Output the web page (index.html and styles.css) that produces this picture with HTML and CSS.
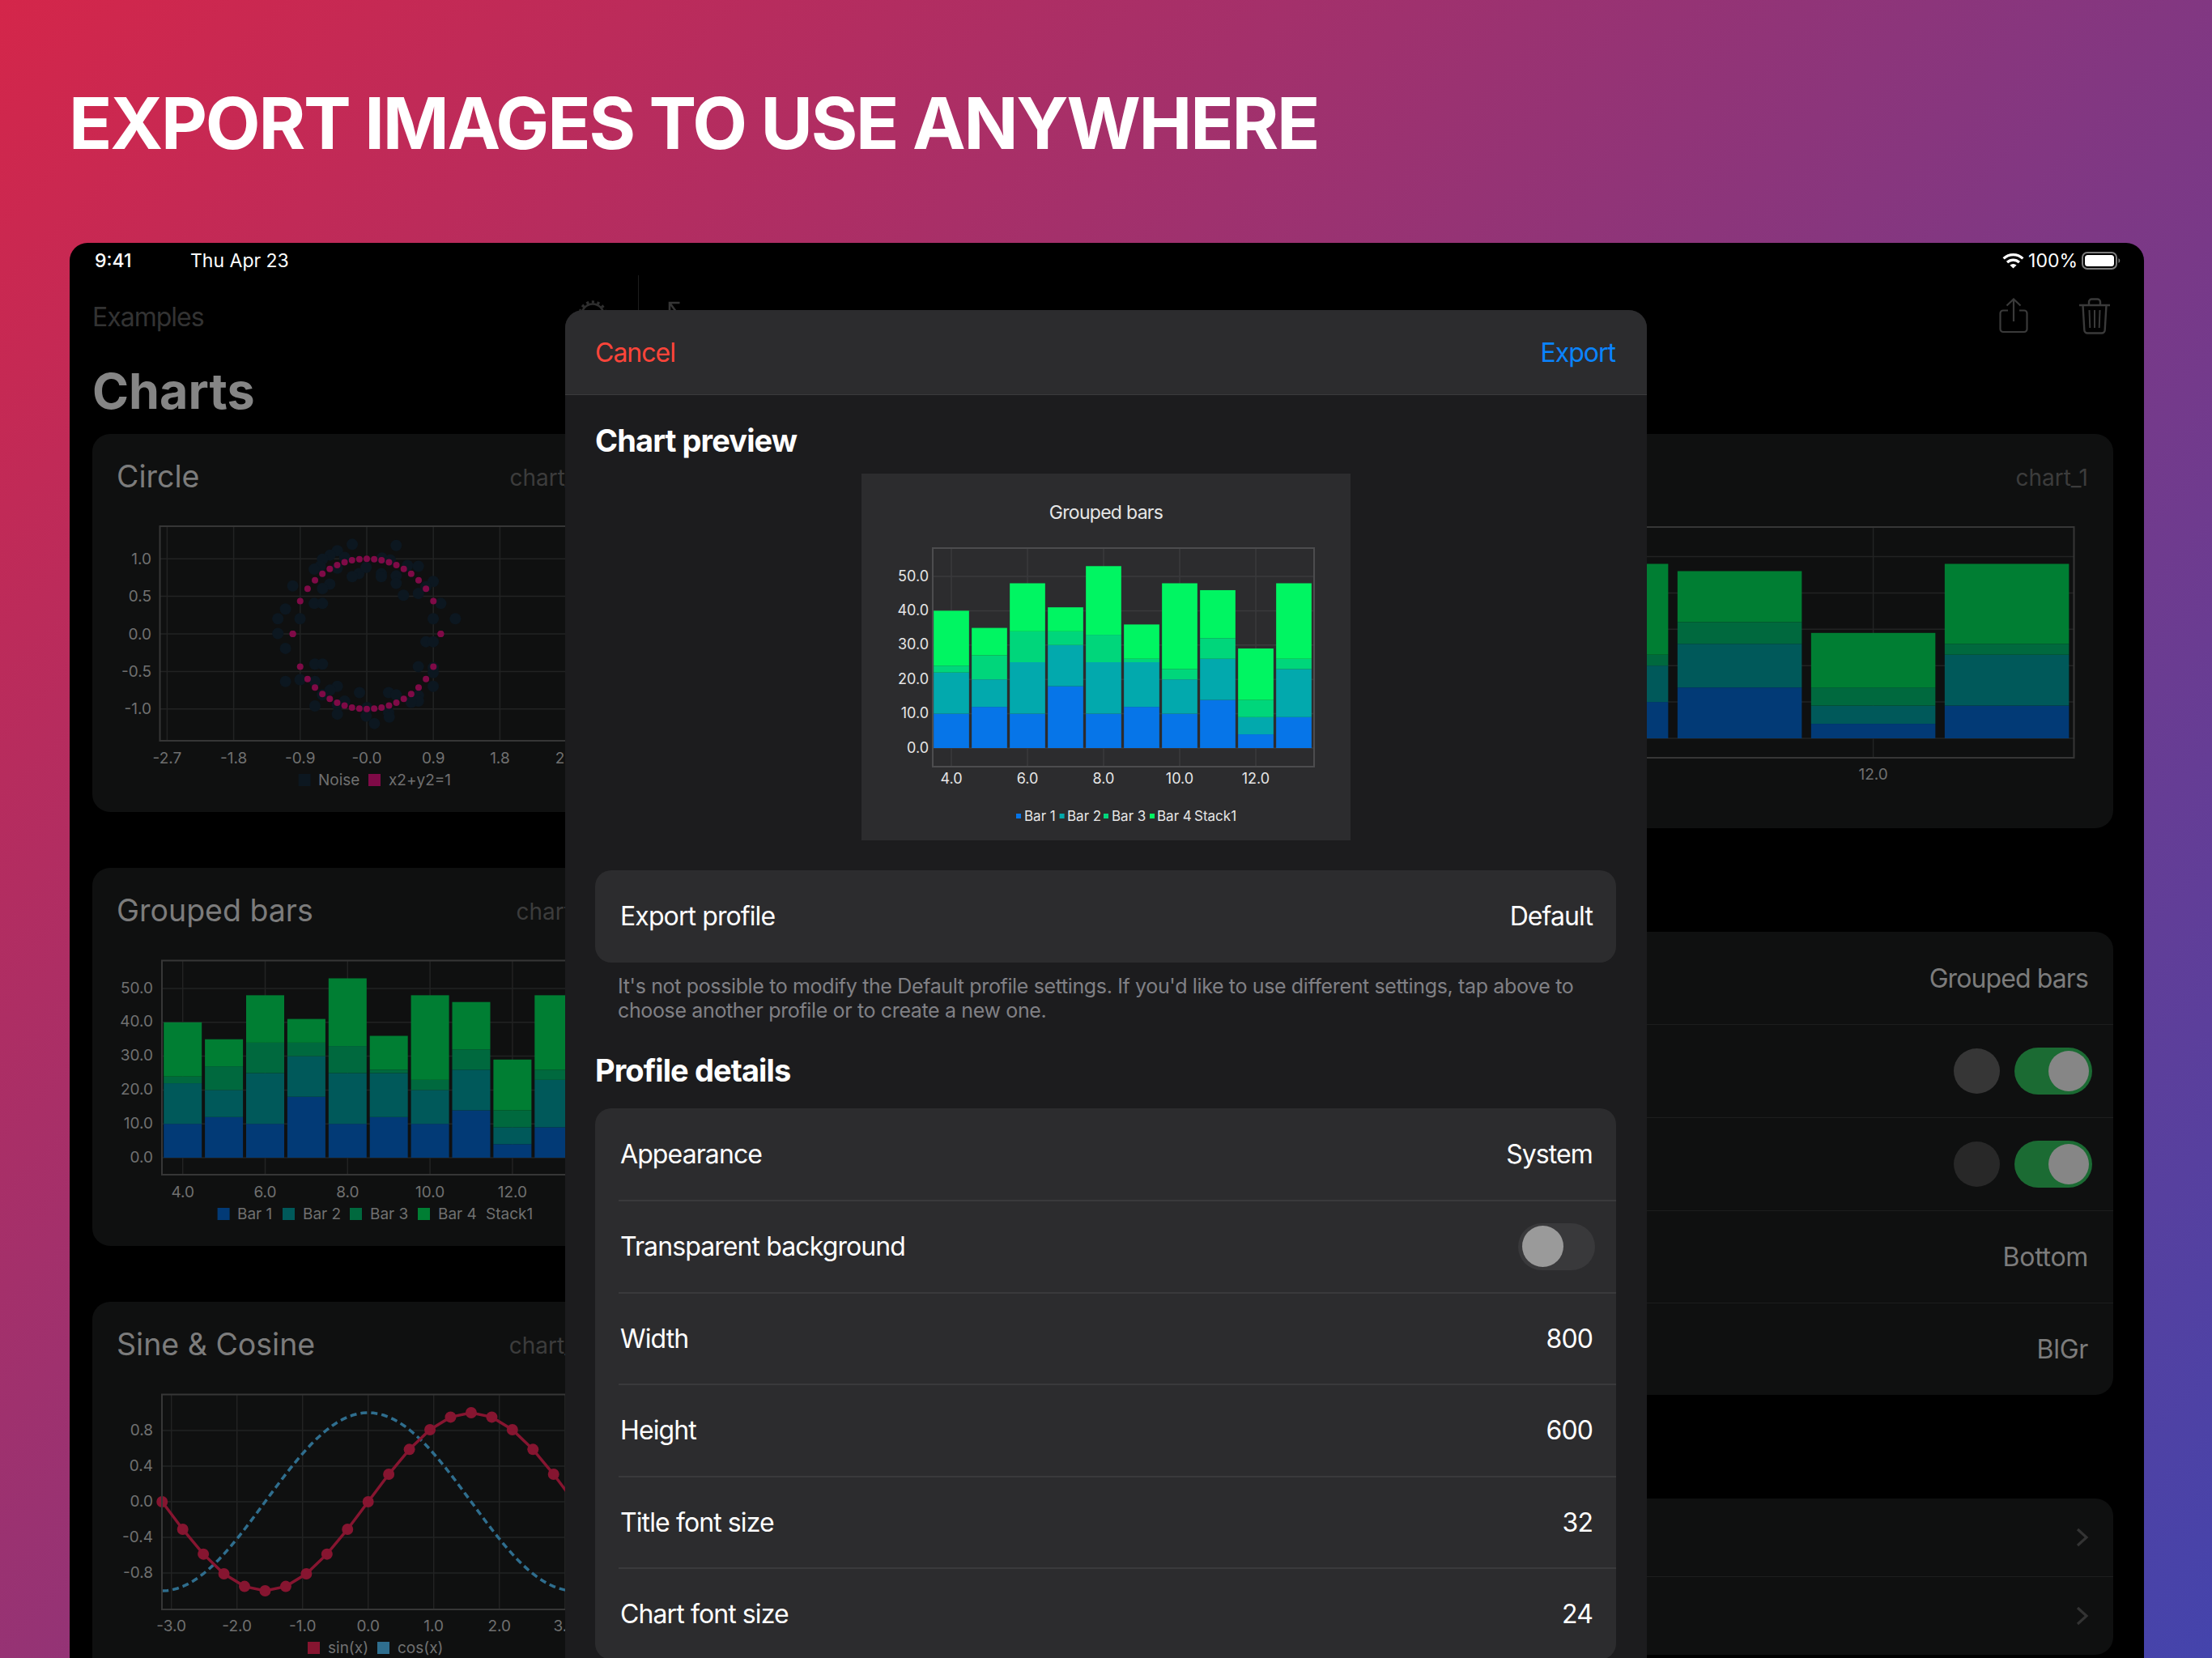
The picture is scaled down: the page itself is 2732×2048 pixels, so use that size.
FILE: index.html
```html
<!DOCTYPE html>
<html lang="en">
<head>
  <meta charset="UTF-8">
  <title>Export images to use anywhere</title>
  <link rel="stylesheet" href="styles.css">
</head>
<body>
  <header class="banner">
    <h1>EXPORT IMAGES TO USE ANYWHERE</h1>
  </header>

  <div class="device">
    <div class="status-bar">
      <span class="status-time">9:41</span>
      <span class="status-date">Thu Apr 23</span>
      <span class="status-right">
        <svg class="wifi" width="27" height="20" viewBox="0 0 27 20">
          <path d="M1.6 7.4a17 17 0 0 1 23.8 0" fill="none" stroke="#fff" stroke-width="3.2"/>
          <path d="M6 12a11 11 0 0 1 15 0" fill="none" stroke="#fff" stroke-width="3.2"/>
          <path d="M13.5 19.6 9.4 15.6a6 6 0 0 1 8.2 0z" fill="#fff"/>
        </svg>
        <span class="status-battery">100%</span>
        <svg width="49" height="22" viewBox="0 0 49 22">
          <rect x="1" y="1" width="42" height="20" rx="6" fill="none" stroke="#7d7d7d" stroke-width="2"/>
          <rect x="4" y="4" width="36" height="14" rx="3.5" fill="#fff"/>
          <path d="M45.5 8v6a3.4 3.4 0 0 0 0-6z" fill="#7d7d7d"/>
        </svg>
      </span>
    </div>

    <div class="split">
      <aside class="sidebar">
        <div class="sidebar-nav">
          <span class="nav-back">Examples</span>
          <svg class="gear" width="36" height="36" viewBox="0 0 36 36">
            <circle cx="18" cy="18" r="13.5" fill="none" stroke="#2e2e2e" stroke-width="2.5"/>
            <circle cx="18" cy="18" r="16" fill="none" stroke="#2e2e2e" stroke-width="3.5" stroke-dasharray="3.2 3.5"/>
          </svg>
        </div>
        <h2 class="page-title">Charts</h2>

        <section class="card chart-card">
          <div class="card-head"><span class="card-title">Circle</span><span class="card-id">chart_0</span></div>
          <svg class="chart" id="chartCircle" width="636" height="383"></svg>
        </section>

        <section class="card chart-card">
          <div class="card-head"><span class="card-title">Grouped bars</span><span class="card-id">chart_1</span></div>
          <svg class="chart" id="chartBars" width="636" height="383"></svg>
        </section>

        <section class="card chart-card">
          <div class="card-head"><span class="card-title">Sine &amp; Cosine</span><span class="card-id">chart_2</span></div>
          <svg class="chart" id="chartSine" width="636" height="383"></svg>
        </section>
      </aside>

      <main class="detail">
        <div class="detail-nav">
          <svg class="expand" width="18" height="24" viewBox="0 0 18 24">
            <path d="M15.5 2H3v12M3 2l14 19" fill="none" stroke="#353535" stroke-width="2.6"/>
          </svg>
          <svg class="share" width="36" height="44" viewBox="0 0 36 44">
            <path d="M11 15.5H5a3.5 3.5 0 0 0-3.5 3.5v19.5A3.5 3.5 0 0 0 5 42h26a3.5 3.5 0 0 0 3.5-3.5V19a3.5 3.5 0 0 0-3.5-3.5h-6" fill="none" stroke="#3a3a3a" stroke-width="2.2"/>
            <path d="M18 29V2M9.5 9.5 18 1.5l8.5 8" fill="none" stroke="#3a3a3a" stroke-width="2.2"/>
          </svg>
          <svg class="trash" width="40" height="45" viewBox="0 0 40 45">
            <path d="M1 9h38M13 9V5a3.5 3.5 0 0 1 3.5-3.5h7A3.5 3.5 0 0 1 27 5v4" fill="none" stroke="#3a3a3a" stroke-width="2.4"/>
            <path d="M5.5 9l1.8 30.5a4 4 0 0 0 4 4h17.4a4 4 0 0 0 4-4L34.500 9" fill="none" stroke="#3a3a3a" stroke-width="2.4"/>
            <path d="M13.500 15l.8 22M20 15v22M26.500 15l-.8 22" fill="none" stroke="#3a3a3a" stroke-width="2"/>
          </svg>
        </div>

        <section class="card chart-card chart-card-wide">
          <div class="card-head card-head-right"><span class="card-id">chart_1</span></div>
          <svg class="chart" id="chartBarsWide" width="1795" height="403"></svg>
        </section>

        <section class="card settings">
          <div class="set-row"><span class="set-value set-value-tight">Grouped bars</span></div>
          <div class="set-row set-row-toggle">
            <span class="swatch swatch-a"></span>
            <span class="dim-toggle"><span class="dim-knob"></span></span>
          </div>
          <div class="set-row set-row-toggle">
            <span class="swatch swatch-b"></span>
            <span class="dim-toggle"><span class="dim-knob"></span></span>
          </div>
          <div class="set-row"><span class="set-value">Bottom</span></div>
          <div class="set-row"><span class="set-value">BlGr</span></div>
        </section>

        <section class="card links">
          <div class="link-row">
            <svg width="16" height="24" viewBox="0 0 16 24"><path d="M2 2l11 10L2 22" fill="none" stroke="#333" stroke-width="3.2"/></svg>
          </div>
          <div class="link-row">
            <svg width="16" height="24" viewBox="0 0 16 24"><path d="M2 2l11 10L2 22" fill="none" stroke="#333" stroke-width="3.2"/></svg>
          </div>
        </section>
      </main>
    </div>

    <div class="modal">
      <div class="modal-head">
        <span class="btn-cancel">Cancel</span>
        <span class="btn-export">Export</span>
      </div>
      <div class="modal-body">
        <h3 class="modal-heading">Chart preview</h3>
        <svg class="preview" id="chartPreview" width="604" height="453"></svg>

        <div class="group group-profile">
          <div class="group-row"><span>Export profile</span><span>Default</span></div>
        </div>
        <p class="note">It's not possible to modify the Default profile settings. If you'd like to use different settings, tap above to choose another profile or to create a new one.</p>

        <h3 class="modal-heading heading-details">Profile details</h3>
        <div class="group">
          <div class="group-row"><span>Appearance</span><span>System</span></div>
          <div class="group-row">
            <span>Transparent background</span>
            <span class="toggle"><span class="knob"></span></span>
          </div>
          <div class="group-row"><span>Width</span><span>800</span></div>
          <div class="group-row"><span>Height</span><span>600</span></div>
          <div class="group-row"><span>Title font size</span><span>32</span></div>
          <div class="group-row"><span>Chart font size</span><span>24</span></div>
        </div>
      </div>
    </div>
  </div>

  <script src="charts.js"></script>
</body>
</html>
```

FILE: styles.css
```css
* {
  box-sizing: border-box;
}

html, body {
  margin: 0;
  height: 2048px;
  overflow: hidden;
}

body {
  font-family: 'Inter', 'Liberation Sans', sans-serif;
  background: linear-gradient(135deg, #d4264a 0%, #4444ac 100%);
  color: #fff;
}

.banner {
  height: 300px;
  padding: 90px 0 0 85px;
}

.banner h1 {
  margin: 0;
  font-size: 88px;
  line-height: 124px;
  font-weight: 700;
  letter-spacing: -2.2px;
  color: #fff;
}

.device {
  position: relative;
  width: 2562px;
  height: 1748px;
  margin-left: 86px;
  background: #000;
  border-radius: 22px 22px 0 0;
  overflow: hidden;
}

/* status bar */
.status-bar {
  display: flex;
  align-items: center;
  height: 40px;
  padding: 3px 28px 0 31px;
  font-size: 23px;
}

.status-time {
  width: 118px;
  font-weight: 500;
}

.status-right {
  display: flex;
  align-items: center;
  gap: 5px;
  margin-left: auto;
}

.status-battery {
  font-size: 23px;
}

.split {
  display: flex;
}

/* left column */
.sidebar {
  flex: 0 0 703px;
  height: 1708px;
  padding: 0 30px 0 28px;
  border-right: 1px solid #1c1c1c;
}

.sidebar-nav {
  display: flex;
  justify-content: space-between;
  align-items: center;
  padding-top: 32px;
  height: 72px;
}

.nav-back {
  font-size: 32px;
  letter-spacing: -1px;
  line-height: 40px;
  color: #333;
}

.gear {
  margin: -6px 8px 0 0;
}

.page-title {
  margin: 35px 0 17px;
  font-size: 61px;
  line-height: 72px;
  font-weight: 700;
  color: #858585;
}

.card {
  background: #0f1010;
  border-radius: 22px;
}

.chart-card {
  height: 467px;
  margin-bottom: 69px;
  overflow: hidden;
}

.chart-card-wide {
  height: 487px;
  margin-bottom: 128px;
}

.card-head {
  display: flex;
  justify-content: space-between;
  align-items: center;
  height: 84px;
  padding: 32px 31px 10px 30px;
}

.card-head-right {
  justify-content: flex-end;
}

.card-title {
  font-size: 37.500px;
  line-height: 44px;
  color: #7c7c7c;
}

.card-id {
  font-size: 28px;
  line-height: 42px;
  padding-top: 2px;
  color: #3c3c3c;
}

.chart {
  display: block;
}

.chart text {
  font-family: 'Inter', 'Liberation Sans', sans-serif;
  font-size: 19px;
  fill: #707070;
}

/* right column */
.detail {
  flex: 1;
  padding: 0 38px 0 25px;
}

.detail-nav {
  display: flex;
  height: 196px;
  padding-top: 28px;
}

.expand {
  margin: 4px 0 0 10px;
}

.share {
  margin-left: auto;
}

.trash {
  margin: 0 3px 0 62px;
}

.set-row {
  display: flex;
  justify-content: flex-end;
  align-items: center;
  height: 114px;
  padding-right: 31px;
  border-top: 1px solid #1d1e1e;
}

.set-row:first-child {
  border-top: none;
}

.set-row-toggle {
  height: 115px;
  gap: 18px;
  padding-right: 26px;
}

.set-value {
  font-size: 32px;
  letter-spacing: -0.3px;
  color: #7c7c7c;
}

.set-value-tight {
  letter-spacing: -0.9px;
}

.swatch {
  width: 57px;
  height: 56px;
  border-radius: 50%;
}

.swatch-a {
  background: #363636;
}

.swatch-b {
  background: #282828;
}

.dim-toggle {
  display: flex;
  justify-content: flex-end;
  align-items: center;
  width: 96px;
  height: 58px;
  padding-right: 4px;
  border-radius: 29px;
  background: #1b6b33;
}

.dim-knob {
  width: 50px;
  height: 50px;
  border-radius: 50%;
  background: #868686;
}

.links {
  height: 193px;
  margin-top: 128px;
}

.link-row {
  display: flex;
  justify-content: flex-end;
  align-items: center;
  height: 96px;
  padding-right: 30px;
  border-top: 1px solid #1d1e1e;
}

.link-row:first-child {
  border-top: none;
}

/* export sheet, sits over both columns */
.modal {
  position: absolute;
  left: 612px;
  top: 83px;
  width: 1336px;
  height: 1700px;
  background: #1c1c1e;
  border-radius: 22px 22px 0 0;
  overflow: hidden;
}

.modal-head {
  display: flex;
  justify-content: space-between;
  align-items: center;
  height: 105px;
  padding: 0 39px 0 37px;
  background: #2c2c2e;
  border-bottom: 1px solid #3a3a3c;
  font-size: 32px;
  letter-spacing: -1px;
}

.btn-cancel {
  color: #ff453a;
}

.btn-export {
  color: #0a84ff;
}

.modal-body {
  display: flex;
  flex-direction: column;
  padding: 36px 38px 0 37px;
}

.modal-heading {
  margin: 0;
  font-size: 38px;
  line-height: 40px;
  font-weight: 700;
  letter-spacing: -0.9px;
}

.heading-details {
  margin-top: 39px;
  margin-bottom: 27px;
}

.preview {
  display: block;
  flex: none;
  margin: 21px auto 37px;
  background: #2c2c2e;
}

.preview text {
  font-family: 'Inter', 'Liberation Sans', sans-serif;
  font-size: 18px;
  fill: #e6e6e6;
}

.preview .preview-title {
  font-size: 23px;
  letter-spacing: -0.7px;
}

.preview .preview-legend {
  font-size: 17px;
}

.group {
  background: #2c2c2e;
  border-radius: 20px;
  padding-left: 29px;
  font-size: 32px;
  letter-spacing: -0.9px;
}

.group-row {
  display: flex;
  justify-content: space-between;
  align-items: center;
  height: 113.500px;
  padding-right: 29px;
  border-top: 2px solid #3a3a3c;
}

.group-row:first-child {
  border-top: none;
}

.group-row span:first-child {
  margin-left: 2px;
}

.note {
  margin: 14px 0 0 28px;
  max-width: 1210px;
  font-size: 25px;
  letter-spacing: -0.36px;
  line-height: 30px;
  color: #808085;
}

.toggle {
  display: flex;
  align-items: center;
  width: 95px;
  height: 58px;
  margin-right: -3px;
  padding-left: 3px;
  border-radius: 29px;
  background: #39393b;
}

.knob {
  width: 51px;
  height: 51px;
  border-radius: 50%;
  background: #9a9a9a;
}
```

FILE: charts.js
```js
const DIM = { grid: '#222323', frame: '#363636', colors: ['#023a76', '#00595a', '#00693e', '#007e33'] };
const LIT = { grid: '#3a3a3c', frame: '#4c4c4e', colors: ['#0675e8', '#02a9ad', '#00d67b', '#00f562'] };

// [bar 1, bar 2, bar 3, bar 4] for x = 4..13
const STACKS = [
  [10, 12, 2, 16], [12, 8, 7, 8], [10, 15, 9, 14], [18, 12, 4, 7], [10, 15, 8, 20],
  [12, 13, 1, 10], [10, 10, 3, 25], [14, 12, 6, 14], [4, 5, 5, 15], [9, 14, 3, 22],
];

// noise cloud, sampled off the reference plot (offsets from the plot centre)
const NOISE = [
  [-44, -241], [89, -238], [-89, -224], [-111, -212], [-134, -201], [-67, -206], [46, -204], [71, -199],
  [123, -184], [156, -182], [-141, -182], [-159, -174], [-89, -177], [-24, -162], [-2, -179], [44, -162],
  [44, -154], [-44, -154], [89, -156], [201, -141], [-224, -129], [-112, -134], [-134, -122], [89, -136],
  [179, -127], [111, -104], [156, -109], [-159, -82], [-134, -82], [224, -82], [-246, -67], [-269, -41],
  [-202, -41], [201, -41], [268, -41], [-269, -1], [-246, 39], [179, 21], [201, 21], [-157, 81],
  [-134, 81], [156, 88], [201, 91], [201, 104], [-246, 128], [-202, 123], [-157, 128], [-89, 141],
  [-111, 151], [-134, 164], [201, 141], [-22, 158], [66, 158], [89, 164], [156, 166], [156, 181],
  [134, 184], [-67, 181], [-89, 191], [-157, 194], [-89, 216], [1, 198], [-2, 221], [66, 211],
  [68, 224], [23, 241],
];

function line(x1, y1, x2, y2, color) {
  return `<line x1="${x1}" y1="${y1}" x2="${x2}" y2="${y2}" stroke="${color}" stroke-width="1.500"/>`;
}

function label(x, y, str, anchor, cls) {
  return `<text x="${x}" y="${y}" text-anchor="${anchor || 'middle'}" dominant-baseline="central"${cls ? ` class="${cls}"` : ''}>${str}</text>`;
}

function legend(items, y, size, cls) {
  return items.map(it => (it.color ? `<rect x="${it.x}" y="${y - size / 2}" width="${size}" height="${size}" fill="${it.color}"/>` : '')
    + label(it.textX, y, it.text, 'start', cls)).join('');
}

function frame(f, theme) {
  return `<rect x="${f[0]}" y="${f[1]}" width="${f[2] - f[0]}" height="${f[3] - f[1]}" fill="none" stroke="${theme.frame}" stroke-width="2"/>`;
}

function barChart(o) {
  const theme = o.theme;
  let out = '';
  for (let v = 0; v <= 50; v += 10) {
    const y = o.base - v * o.unitY;
    out += line(o.frame[0], y, o.frame[2], y, theme.grid);
    if (o.yLabelX) out += label(o.yLabelX, y - 1, v.toFixed(1), 'end');
  }
  for (let v = 4; v <= 12; v += 2) {
    const x = o.x4 + (v - 4) * o.unitX;
    out += line(x, o.frame[1], x, o.frame[3], theme.grid);
    if (o.xTicks.includes(v)) out += label(x, o.xLabelY, v.toFixed(1));
  }
  STACKS.forEach((stack, i) => {
    const x = o.x4 + i * o.unitX - o.barW / 2;
    let top = o.base;
    stack.forEach((v, j) => {
      const h = v * o.unitY;
      top -= h;
      out += `<rect x="${x}" y="${top}" width="${o.barW}" height="${h}" fill="${theme.colors[j]}"/>`;
    });
  });
  return out + frame(o.frame, theme);
}

function drawCircle() {
  const cx = 339;
  const cy = 163;
  const f = [83.5, 30, 640, 295];
  let out = '';
  [-1, -0.5, 0, 0.5, 1].forEach(v => {
    const y = cy - v * 92.8;
    out += line(f[0], y, f[2], y, DIM.grid);
    out += label(73, y, v.toFixed(1), 'end');
  });
  ['-2.7', '-1.8', '-0.9', '-0.0', '0.9', '1.8', '2.7'].forEach((t, i) => {
    const x = cx + (i - 3) * 82.2;
    out += line(x, f[1], x, f[3], DIM.grid);
    out += label(x, 316, t);
  });
  NOISE.forEach(p => {
    out += `<circle cx="${cx + p[0] / 2.45}" cy="${cy + p[1] / 2.178}" r="7" fill="#0c1720"/>`;
  });
  for (let i = -10; i <= 10; i++) {
    const x = i / 10;
    const y = Math.sqrt(Math.max(0, 1 - x * x));
    [y, -y].forEach(v => {
      out += `<circle cx="${cx + x * 91.4}" cy="${cy - v * 92.8}" r="4" fill="#7f0a47"/>`;
    });
  }
  out += frame(f, DIM);
  out += legend([
    { x: 254.6, color: '#0c1720', textX: 279, text: 'Noise' },
    { x: 341, color: '#7f0a47', textX: 366, text: 'x2+y2=1' },
  ], 343.5, 15);
  document.getElementById('chartCircle').innerHTML = out;
}

function drawSine() {
  const x0 = 340.7;
  const y0 = 163;
  const f = [86, 30.5, 640, 296];
  const toX = x => x0 + x * 81;
  const toY = y => y0 - y * 110;
  let out = '';
  [-0.8, -0.4, 0, 0.4, 0.8].forEach(v => {
    const y = toY(v);
    out += line(f[0], y, f[2], y, DIM.grid);
    out += label(75, y - 1, v.toFixed(1), 'end');
  });
  [-3, -2, -1, 0, 1, 2, 3].forEach(v => {
    out += line(toX(v), f[1], toX(v), f[3], DIM.grid);
    out += label(toX(v), 316, v.toFixed(1));
  });
  const sinPts = [];
  const cosPts = [];
  for (let i = -10; i <= 10; i++) {
    const x = i * Math.PI / 10;
    sinPts.push(`${toX(x)},${toY(Math.sin(x))}`);
  }
  for (let i = -40; i <= 40; i++) {
    const x = i * Math.PI / 40;
    cosPts.push(`${toX(x)},${toY(Math.cos(x))}`);
  }
  out += `<polyline points="${cosPts.join(' ')}" fill="none" stroke="#2f6e8e" stroke-width="3.500" stroke-dasharray="8 5"/>`;
  out += `<polyline points="${sinPts.join(' ')}" fill="none" stroke="#861530" stroke-width="3.500"/>`;
  sinPts.forEach(p => {
    const [cx, cy] = p.split(',');
    out += `<circle cx="${cx}" cy="${cy}" r="7" fill="#861530"/>`;
  });
  out += frame(f, DIM);
  out += legend([
    { x: 266, color: '#861530', textX: 291, text: 'sin(x)' },
    { x: 352, color: '#2f6e8e', textX: 377, text: 'cos(x)' },
  ], 343.5, 15);
  document.getElementById('chartSine').innerHTML = out;
}

document.getElementById('chartBars').innerHTML = barChart({
  theme: DIM, frame: [86, 30.5, 640, 295], base: 274, unitY: 4.18, x4: 111.7, unitX: 50.9, barW: 47,
  yLabelX: 75, xLabelY: 316, xTicks: [4, 6, 8, 10, 12],
}) + legend([
  { x: 154.6, color: DIM.colors[0], textX: 179, text: 'Bar 1' },
  { x: 235, color: DIM.colors[1], textX: 260, text: 'Bar 2' },
  { x: 318, color: DIM.colors[2], textX: 343, text: 'Bar 3' },
  { x: 402, color: DIM.colors[3], textX: 427, text: 'Bar 4' },
  { textX: 486, text: 'Stack1' },
], 343.5, 15);

document.getElementById('chartBarsWide').innerHTML = barChart({
  theme: DIM, frame: [120, 31, 1747.5, 316], base: 292, unitY: 4.49, x4: 179.6, unitX: 165, barW: 153.5,
  xLabelY: 336, xTicks: [12],
});

document.getElementById('chartPreview').innerHTML = label(302, 48, 'Grouped bars', 'middle', 'preview-title') + barChart({
  theme: LIT, frame: [88, 92, 559, 362], base: 339, unitY: 4.24, x4: 111, unitX: 47, barW: 43.7,
  yLabelX: 83, xLabelY: 376, xTicks: [4, 6, 8, 10, 12],
}) + legend([
  { x: 191, color: LIT.colors[0], textX: 201, text: 'Bar 1' },
  { x: 244.6, color: LIT.colors[1], textX: 254, text: 'Bar 2' },
  { x: 299, color: LIT.colors[2], textX: 309, text: 'Bar 3' },
  { x: 356, color: LIT.colors[3], textX: 365, text: 'Bar 4' },
  { textX: 411, text: 'Stack1' },
], 423, 6, 'preview-legend');

drawCircle();
drawSine();
```
